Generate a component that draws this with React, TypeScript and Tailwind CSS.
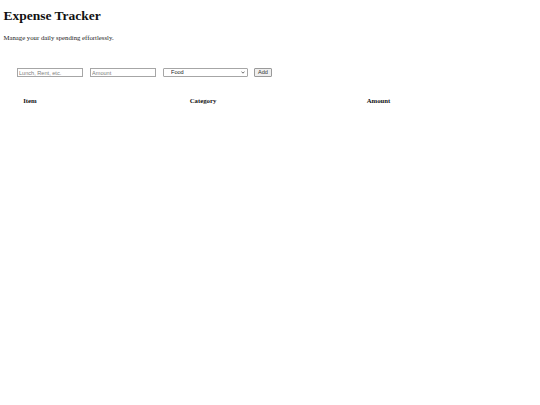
import React from "react";

export default function App() {
  const serif = { fontFamily: '"Liberation Serif", "Times New Roman", serif' };
  return (
    <div className="min-h-[405px] w-[540px] bg-white pl-[3.4px] pt-[8px] text-black" style={serif}>
      <h1 className="text-[13.5px] font-bold leading-[15px] text-[#111] [font-family:'Liberation_Serif',serif]">Expense Tracker</h1>
      <p className="mt-[10.5px] text-[6.75px] leading-[7.5px] text-[#222] [font-family:'Liberation_Serif',serif]">
        Manage your daily spending effortlessly.
      </p>
      <form className="mt-[27px] flex items-center pl-[13.6px] text-[5.6px] leading-[7px] [font-family:'Liberation_Sans',Arial,sans-serif]" onSubmit={(e) => e.preventDefault()}>
        <input
          type="text"
          placeholder="Lunch, Rent, etc."
          className="block h-[9px] w-[66px] border border-[#a6a6a6] bg-white px-[1px] text-[5.6px] leading-[7px] placeholder:text-[#7d7d7d]"
        />
        <input
          type="number"
          placeholder="Amount"
          className="ml-[7px] block h-[9px] w-[66px] border border-[#a6a6a6] bg-white px-[1px] text-[5.6px] leading-[7px] placeholder:text-[#7d7d7d]"
        />
        <div className="relative ml-[7px] h-[9px] w-[85px]">
          <select className="block h-[9px] w-[85px] appearance-none rounded-[1px] border border-[#a6a6a6] bg-white py-0 pl-[7px] text-[5.6px] leading-[7px] text-[#222]">
            <option>Food</option>
            <option>Rent</option>
            <option>Transport</option>
            <option>Other</option>
          </select>
          <svg className="pointer-events-none absolute right-[2.5px] top-[3px] h-[3px] w-[4px]" viewBox="0 0 8 6">
            <path d="M1 1.2 L4 4.4 L7 1.2" fill="none" stroke="#333" strokeWidth="1.4" />
          </svg>
        </div>
        <button
          type="submit"
          className="ml-[6px] block h-[9px] w-[18px] rounded-[1px] border border-[#9a9a9a] bg-[#efefef] text-[5.6px] leading-[7px] text-[#333]"
        >
          Add
        </button>
      </form>
      <div className="mt-[19.5px] flex pl-[13.6px] text-[6.75px] font-bold leading-[8px] text-[#111] [font-family:'Liberation_Serif',serif]">
        <div className="w-[26px] text-center">Item</div>
        <div className="w-[320px] text-center">Category</div>
        <div className="w-[31px] text-center">Amount</div>
      </div>
    </div>
  );
}
